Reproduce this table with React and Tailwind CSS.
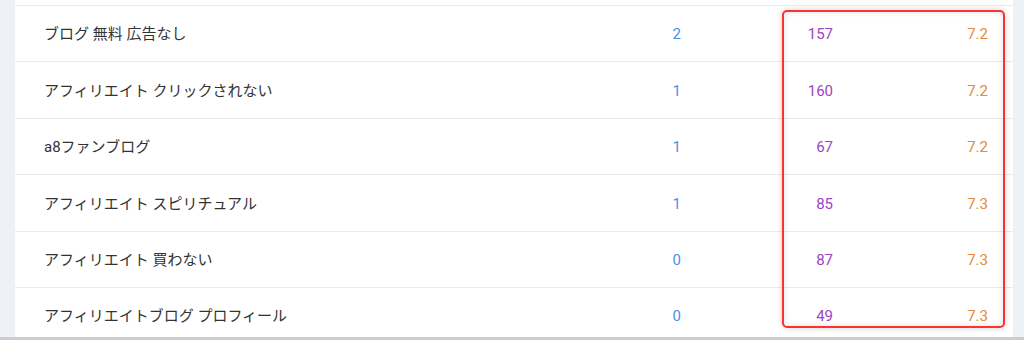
const ROWS = [
  { keyword: 'ブログ 無料 広告なし', count: 2, volume: 157, score: '7.2' },
  { keyword: 'アフィリエイト クリックされない', count: 1, volume: 160, score: '7.2' },
  { keyword: 'a8ファンブログ', count: 1, volume: 67, score: '7.2' },
  { keyword: 'アフィリエイト スピリチュアル', count: 1, volume: 85, score: '7.3' },
  { keyword: 'アフィリエイト 買わない', count: 0, volume: 87, score: '7.3' },
  { keyword: 'アフィリエイトブログ プロフィール', count: 0, volume: 49, score: '7.3' },
];

const App = () => {
  return (
    <div
      className="relative flex h-[340px] w-[1024px] overflow-hidden bg-[#eef2f7]"
      style={{ fontFamily: "Roboto, 'Noto Sans CJK JP', sans-serif" }}
    >
      <div className="w-[15px] shrink-0" />
      <div className="flex w-[998px] shrink-0 flex-col bg-white">
        <div className="h-[5px] shrink-0" />
        <div className="flex-1 border-t border-[#ebebeb]">
          {ROWS.map((row) => (
            <div
              key={row.keyword}
              className="flex h-[56.4px] items-center border-b border-[#ebebeb] pt-[2px] text-[15px]"
            >
              <div className="w-[400px] pl-[29px] text-[#333]">{row.keyword}</div>
              <div className="w-[266px] text-right text-[#4a90e2]">{row.count}</div>
              <div className="w-[152px] text-right text-[#9b45c0]">{row.volume}</div>
              <div className="w-[155px] text-right text-[#e48a3c]">{row.score}</div>
            </div>
          ))}
        </div>
      </div>
      <div className="flex-1" />
      <div className="absolute bottom-0 left-0 h-[3px] w-full bg-[#c9ced3]" />
      <div className="absolute left-[782px] top-[10px] h-[318px] w-[223px] rounded-[5px] border-2 border-[#ff3030] shadow-[0_0_6px_rgba(0,0,0,0.18),inset_0_0_6px_rgba(0,0,0,0.12)]" />
    </div>
  );
};

export default App;
